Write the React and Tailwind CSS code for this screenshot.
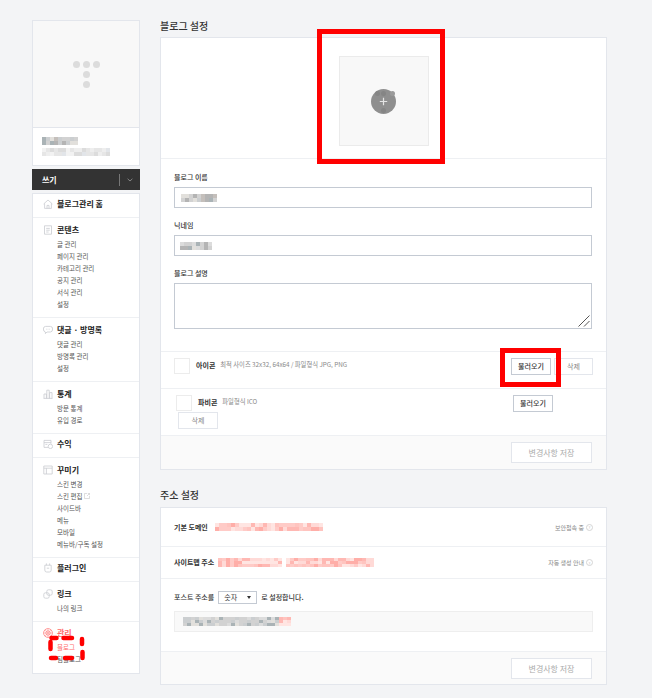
import React from "react";

const ink = "text-[#333]";

function Mosaic({ w, h, cell = 4, seed = 1, tones, className = "" }) {
  const cols = Math.ceil(w / cell);
  const rows = Math.ceil(h / cell);
  const cells = [];
  let s = seed * 7919;
  for (let i = 0; i < cols * rows; i++) {
    s = (s * 1103515245 + 12345) & 0x7fffffff;
    cells.push(tones[(s >> 8) % tones.length]);
  }
  return (
    <div className={`grid shrink-0 blur-[0.6px] ${className}`} style={{ width: w, height: h, gridTemplateColumns: `repeat(${cols},1fr)`, gridTemplateRows: `repeat(${rows},1fr)` }}>
      {cells.map((c, i) => (
        <div key={i} style={{ background: c }} />
      ))}
    </div>
  );
}

const grey = ["#b4b4b4", "#c4bfbb", "#d2d2d2", "#dcdcdc", "#aab3b6", "#cbced0", "#e2e0dc"];
const lightGrey = ["#dcdcdc", "#e6e6e6", "#eeeeee", "#e2e5e9", "#f2f2f2"];
const pink = ["#ffb8b3", "#ffcbc7", "#ffdad7", "#ffaea8", "#ffe5e2", "#ffc4bf"];

const iconProps = { width: 10, height: 10, viewBox: "0 0 10 10", fill: "none", stroke: "#c9ccd1", strokeWidth: 0.8 };
const icons = {
  home: <svg {...iconProps}><path d="M0.6 5 L5 1 L9.4 5 M1.6 4.4 V9.4 H8.4 V4.4 M4 9.4 V6.4 H6 V9.4" /></svg>,
  doc: <svg {...iconProps}><path d="M1.5 .8 H8.5 V9.2 H1.5 Z M3.2 3.4 H6.8 M3.2 5.2 H6.8 M3.2 7 H5.6" /></svg>,
  chat: <svg {...iconProps}><path d="M2.6 1.4 H7.4 Q9.6 1.4 9.6 4 Q9.6 7 7.4 7 H4 L2.4 8.6 V7 Q.4 6.6 .4 4 Q.4 1.4 2.6 1.4 Z M3 4.2 H3.6 M4.7 4.2 H5.3 M6.4 4.2 H7" /></svg>,
  chart: <svg {...iconProps}><path d="M.6 9.4 H9.4 M1 9.4 V5 H3.4 V9.4 M3.8 9.4 V1.2 H6.2 V9.4 M6.6 9.4 V3.6 H9 V9.4" /></svg>,
  money: <svg {...iconProps}><path d="M5 8.4 H1 V1.4 H8 V4.6 M1 3.6 H8 M2.4 5.4 H4.4" /><circle cx="7.4" cy="7.4" r="2.2" /></svg>,
  layout: <svg {...iconProps}><path d="M.8 1 H9.2 V9 H.8 Z M.8 3.2 H9.2 M3.4 3.2 V9" /></svg>,
  plug: <svg {...iconProps}><path d="M1.8 2.2 H8.2 V7 Q8.2 9 6.4 9 H3.6 Q1.8 9 1.8 7 Z M3.4 .4 V2.2 M6.6 .4 V2.2 M3.8 5.2 H6.2" /></svg>,
  link: <svg {...iconProps}><rect x="3.8" y=".8" width="5.4" height="5.4" rx="1.6" /><rect x=".8" y="3.8" width="5.4" height="5.4" rx="1.6" /></svg>,
  gear: <svg width="10" height="10" viewBox="0 0 10 10" fill="none" stroke="#ff7d7d" strokeWidth=".8"><circle cx="5" cy="5" r="4.4" /><circle cx="5" cy="5" r="2.2" /><path d="M1.8 1.8 L8.2 8.2 M8.2 1.8 L1.8 8.2 M5 .6 V9.4 M.6 5 H9.4" strokeWidth=".4" /></svg>,
};

function NavSection({ icon, title, items = [], heightClass, topClass = "pt-[6px]", red, last }) {
  return (
    <div className={`${heightClass} ${topClass} pl-[10px] ${last ? "" : "border-b border-[#eef0f3]"} box-border`}>
      <div className="flex items-center h-[12px]">
        <span className="w-[14px] flex items-center shrink-0">{icon}</span>
        <span className={`text-[8px] font-bold leading-[12px] ${red ? "text-[#ff6b6b]" : "text-[#222]"}`}>{title}</span>
      </div>
      <div className="mt-[2px] pl-[14px]">
        {items.map((it) => (
          <div key={it} className={`h-[12px] text-[6.5px] leading-[12px] flex items-center ${it === "블로그" ? "text-[#ff6b6b]" : "text-[#555]"}`}>
            {it}
            {it === "스킨 편집" && (
              <svg className="ml-[2px]" width="6" height="6" viewBox="0 0 6 6" fill="none" stroke="#c8c8c8" strokeWidth=".6"><path d="M3 .5 H.5 V5.5 H5.5 V3 M3 3 L5.5 .5 M3.8 .5 H5.5 V2.2" /></svg>
            )}
          </div>
        ))}
      </div>
    </div>
  );
}

function Sidebar() {
  return (
    <aside className="w-[108px] shrink-0 relative">
      <div className="border border-[#e3e6ec] bg-white h-[146px] box-border">
        <div className="h-[107px] bg-[#f8f8f8] border-b border-[#e3e6ec] flex flex-col items-center justify-center gap-[3px] box-border">
          <div className="flex gap-[3px]">
            <span className="w-[7px] h-[7px] rounded-full bg-[#dcdcdc]" />
            <span className="w-[7px] h-[7px] rounded-full bg-[#dcdcdc]" />
            <span className="w-[7px] h-[7px] rounded-full bg-[#dcdcdc]" />
          </div>
          <span className="w-[7px] h-[7px] rounded-full bg-[#dcdcdc]" />
          <span className="w-[7px] h-[7px] rounded-full bg-[#dcdcdc]" />
        </div>
        <div className="pl-[9px] pt-[9px]">
          <Mosaic w={36} h={8} seed={3} tones={grey} />
          <Mosaic w={68} h={8} seed={5} className="mt-[3px]" tones={lightGrey} />
        </div>
      </div>
      <div className="mt-[3px] h-[21px] bg-[#333] flex items-center pl-[10px]">
        <span className="text-[8px] font-bold text-white">쓰기</span>
        <span className="ml-auto w-px h-[12px] bg-[#777]" />
        <svg className="ml-[7px] mr-[7px]" width="6" height="4" viewBox="0 0 6 4" fill="none" stroke="#999" strokeWidth=".8"><path d="M.6 .8 L3 3 L5.4 .8" /></svg>
      </div>
      <nav className="mt-[3px] h-[481px] border border-[#e3e6ec] bg-white box-border">
        <NavSection heightClass="h-[24px]" topClass="pt-[4px]" icon={icons.home} title="블로그관리 홈" />
        <NavSection heightClass="h-[100px]" icon={icons.doc} title="콘텐츠" items={["글 관리", "페이지 관리", "카테고리 관리", "공지 관리", "서식 관리", "설정"]} />
        <NavSection heightClass="h-[64px]" icon={icons.chat} title="댓글 · 방명록" items={["댓글 관리", "방명록 관리", "설정"]} />
        <NavSection heightClass="h-[52px]" icon={icons.chart} title="통계" items={["방문 통계", "유입 경로"]} />
        <NavSection heightClass="h-[24px]" topClass="pt-[4px]" icon={icons.money} title="수익" />
        <NavSection heightClass="h-[100px]" icon={icons.layout} title="꾸미기" items={["스킨 변경", "스킨 편집", "사이드바", "메뉴", "모바일", "메뉴바/구독 설정"]} />
        <NavSection heightClass="h-[24px]" topClass="pt-[4px]" icon={icons.plug} title="플러그인" />
        <NavSection heightClass="h-[40px]" icon={icons.link} title="링크" items={["나의 링크"]} />
        <NavSection heightClass="h-[51px]" topClass="pt-[5px]" icon={icons.gear} title="관리" items={["블로그", "팀블로그"]} red last />
      </nav>
      <svg className="absolute left-[16px] top-[614px]" width="40" height="30" viewBox="0 0 40 30" fill="none" stroke="#ff0000" strokeWidth="4.5" strokeLinecap="round">
        <path d="M3.5 4 H8.5 M15.5 4 H24 M34 5 V10 M34.5 18 V24 M17 24 H24 M3 24 H8 M2.5 8 V15" />
      </svg>
    </aside>
  );
}

function Btn({ children, className = "", strong }) {
  return (
    <button className={`box-border border flex items-center justify-center text-[7px] bg-white ${strong ? "border-[#c4cad3] text-[#333] font-medium" : "border-[#e3e6ec] text-[#888]"} ${className}`}>
      {children}
    </button>
  );
}

function Footer({ heightClass }) {
  return (
    <div className={`${heightClass} bg-[#fafafa] flex justify-end pt-[6px] pr-[14px] box-border`}>
      <Btn className="w-[81px] h-[21px] !text-[#aaa] text-[8px] border-[#dfe3ea]">변경사항 저장</Btn>
    </div>
  );
}

function Help() {
  return <span className="ml-[2px] w-[5px] h-[5px] rounded-full border border-[#d5d5d5] inline-flex items-center justify-center text-[4px] leading-none text-[#bbb] box-content">?</span>;
}

function Field({ label, children, mt }) {
  return (
    <div className={mt}>
      <div className="h-[10px] text-[7px] leading-[10px] font-medium text-[#333]">{label}</div>
      {children}
    </div>
  );
}

function Main() {
  return (
    <main className="w-[447px] shrink-0 -mt-[20px] pt-[20px] relative">
      <h2 className={`text-[10px] font-medium leading-[12px] ${ink}`}>블로그 설정</h2>
      <section className="mt-[5px] border border-[#e3e6ec] bg-white h-[433px] box-border">
        <div className="h-[121px] border-b border-[#eef0f3] flex justify-center pt-[18px] box-border">
          <div className="w-[90px] h-[90px] box-border border border-[#ebebeb] bg-[#f8f8f8] flex items-center justify-center">
            <div className="relative w-[25px] h-[25px] rounded-full bg-[#8f8f8f] flex items-center justify-center">
              <span className="absolute left-[4px] top-[2px] w-[5px] h-[5px] rounded-full bg-[#858585]" />
              <span className="absolute left-[10px] top-[2px] w-[5px] h-[5px] rounded-full bg-[#858585]" />
              <span className="absolute left-[19px] top-[2px] w-[5px] h-[5px] rounded-full bg-[#9b9b9b]" />
              <span className="absolute left-[10px] bottom-[1px] w-[5px] h-[5px] rounded-full bg-[#858585]" />
              <svg className="relative" width="9" height="9" viewBox="0 0 9 9" stroke="#e4e4e4" strokeWidth="1.2"><path d="M4.5 .8 V8.2 M.8 4.5 H8.2" /></svg>
            </div>
          </div>
        </div>
        <div className="pl-[13px] pr-[14px] pt-[13px] h-[193px] box-border border-b border-[#eef0f3]">
          <Field label="블로그 이름">
            <div className="mt-[5px] h-[21px] border border-[#c4cad3] box-border flex items-center pl-[6px]">
              <Mosaic w={36} h={8} seed={11} tones={grey} />
            </div>
          </Field>
          <Field label="닉네임" mt="mt-[12px]">
            <div className="mt-[5px] h-[21px] border border-[#c4cad3] box-border flex items-center pl-[5px]">
              <Mosaic w={32} h={8} seed={13} tones={grey} />
            </div>
          </Field>
          <Field label="블로그 설명" mt="mt-[12px]">
            <div className="mt-[5px] h-[46px] border border-[#c4cad3] box-border flex items-end justify-end pr-[1px] pb-[1px]">
              <svg width="12" height="12" viewBox="0 0 12 12" fill="none" stroke="#555" strokeWidth="1"><path d="M.5 11.5 L11.5 .5 M6 11.5 L11.5 6" /></svg>
            </div>
          </Field>
        </div>
        <div className="h-[37px] border-b border-[#eef0f3] box-border flex items-start pt-[6px] pl-[13px] pr-[13px]">
          <div className="w-[16px] h-[16px] border border-[#ececec] box-border shrink-0" />
          <span className="ml-[6px] text-[7px] font-bold text-[#333] leading-[14px]">아이콘</span>
          <span className="ml-[5px] text-[6.3px] text-[#888] leading-[14px]">최적 사이즈 32x32, 64x64 / 파일형식 JPG, PNG</span>
          <Btn strong className="ml-auto w-[40px] h-[17px]">불러오기</Btn>
          <Btn className="ml-[3px] w-[39px] h-[17px]">삭제</Btn>
        </div>
        <div className="h-[47px] border-b border-[#eef0f3] box-border pt-[6px] pl-[15px] pr-[53px]">
          <div className="flex items-start">
            <div className="w-[16px] h-[16px] border border-[#ececec] box-border shrink-0" />
            <span className="ml-[6px] text-[7px] font-bold text-[#333] leading-[14px]">파비콘</span>
            <span className="ml-[5px] text-[6.3px] text-[#888] leading-[14px]">파일형식 ICO</span>
            <Btn strong className="ml-auto w-[40px] h-[17px]">불러오기</Btn>
          </div>
          <Btn className="ml-[2px] w-[40px] h-[17px]">삭제</Btn>
        </div>
        <Footer heightClass="h-[33px]" />
      </section>

      <h2 className={`mt-[19px] text-[10px] font-medium leading-[12px] ${ink}`}>주소 설정</h2>
      <section className="mt-[6px] border border-[#e3e6ec] bg-white h-[178px] box-border">
        <div className="h-[39px] border-b border-[#eef0f3] box-border flex items-center pl-[13px] pr-[13px]">
          <span className="text-[7px] font-bold text-[#333]">기본 도메인</span>
          <Mosaic className="ml-[7px]" w={108} h={8} seed={17} tones={pink} />
          <span className="ml-auto text-[6px] text-[#888]">보안접속 중</span>
          <Help />
        </div>
        <div className="h-[32px] border-b border-[#eef0f3] box-border flex items-center pl-[13px] pr-[13px]">
          <span className="text-[7px] font-bold text-[#333]">사이트맵 주소</span>
          <Mosaic className="ml-[4px]" w={64} h={9} seed={19} tones={pink} />
          <Mosaic className="ml-[4px]" w={88} h={9} seed={23} tones={pink} />
          <span className="ml-auto text-[6px] text-[#888]">자동 생성 안내</span>
          <Help />
        </div>
        <div className="h-[73px] border-b border-[#eef0f3] box-border pt-[12px] pl-[13px] pr-[13px]">
          <div className="flex items-center h-[13px]">
            <span className="text-[7px] font-medium text-[#333]">포스트 주소를</span>
            <div className="ml-[4px] w-[39px] h-[13px] border border-[#c4cad3] box-border flex items-center justify-between pl-[5px] pr-[5px] text-[7px] text-[#333]">
              숫자
              <svg width="4" height="3" viewBox="0 0 4 3" fill="#333"><path d="M0 0 H4 L2 3 Z" /></svg>
            </div>
            <span className="ml-[4px] text-[7px] font-medium text-[#333]">로 설정합니다.</span>
          </div>
          <div className="mt-[7px] h-[21px] bg-[#f9f9f9] border border-[#eeeeee] box-border flex items-center pl-[8px]">
            <Mosaic w={96} h={9} seed={29} tones={grey.slice(2)} />
            <Mosaic w={12} h={9} seed={31} tones={pink} />
          </div>
        </div>
        <Footer heightClass="h-[32px]" />
      </section>

      <div className="absolute left-[157px] top-[29px] w-[128px] h-[135px] border-[5px] border-[#ff0000] box-border" />
      <div className="absolute left-[340px] top-[348px] w-[61px] h-[39px] border-[5px] border-[#ff0000] box-border" />
    </main>
  );
}

export default function App() {
  return (
    <div className="w-[652px] h-[698px] overflow-hidden bg-[#f3f4f6] flex gap-[20px] pl-[32px] pt-[20px] font-['Noto_Sans_CJK_KR','Noto_Sans',sans-serif]">
      <Sidebar />
      <Main />
    </div>
  );
}
